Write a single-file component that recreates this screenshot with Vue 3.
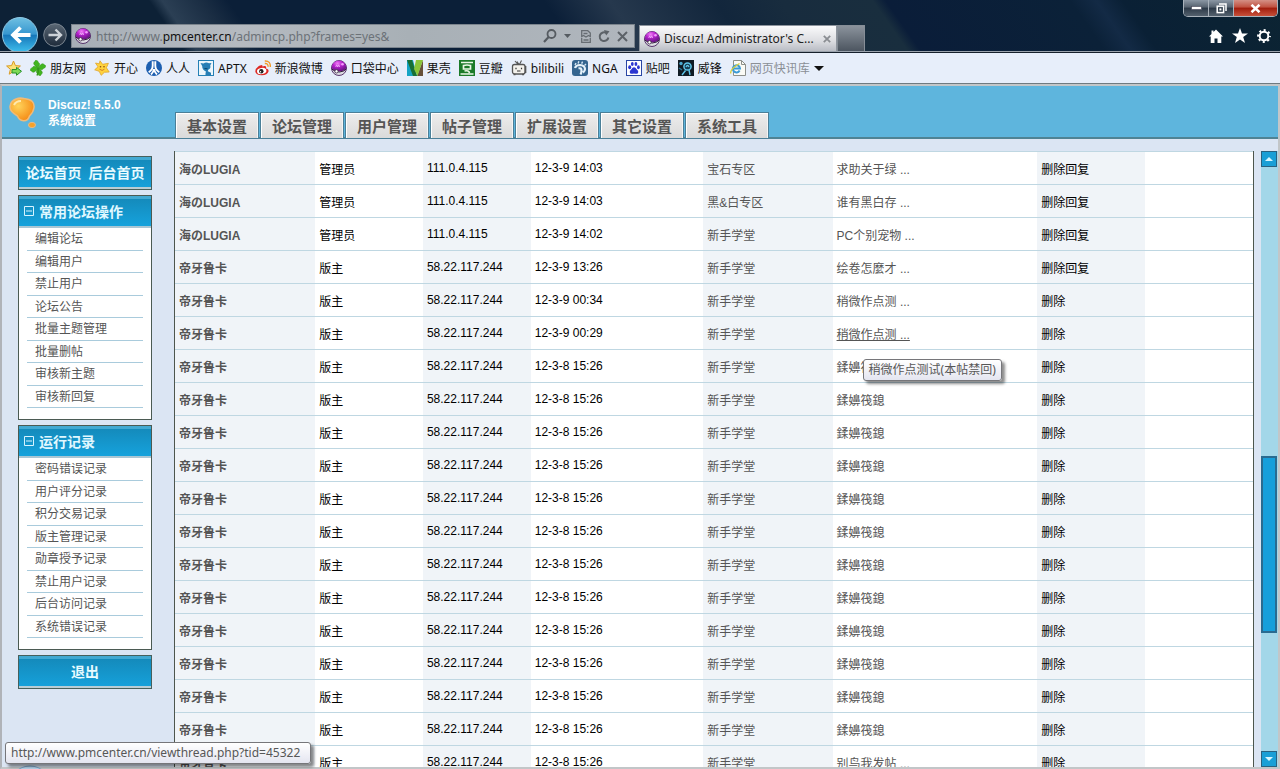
<script setup>
const tabs = ['基本设置', '论坛管理', '用户管理', '帖子管理', '扩展设置', '其它设置', '系统工具']

const favourites = [
  { icon: 'clover', label: '朋友网' },
  { icon: 'happy', label: '开心' },
  { icon: 'renren', label: '人人' },
  { icon: 'aptx', label: 'APTX' },
  { icon: 'weibo', label: '新浪微博' },
  { icon: 'ball', label: '口袋中心' },
  { icon: 'guokr', label: '果壳' },
  { icon: 'douban', label: '豆瓣' },
  { icon: 'bili', label: 'bilibili' },
  { icon: 'nga', label: 'NGA' },
  { icon: 'paw', label: '贴吧' },
  { icon: 'feng', label: '威锋' }
]

const groups = [
  {
    title: '常用论坛操作',
    items: ['编辑论坛', '编辑用户', '禁止用户', '论坛公告', '批量主题管理', '批量删帖', '审核新主题', '审核新回复']
  },
  {
    title: '运行记录',
    items: ['密码错误记录', '用户评分记录', '积分交易记录', '版主管理记录', '勋章授予记录', '禁止用户记录', '后台访问记录', '系统错误记录']
  }
]

const lugia = (time, forum, thread) => ['海のLUGIA', '管理员', '111.0.4.115', time, forum, thread, '删除回复']
const mod = (time, thread, action = '删除') => ['帝牙鲁卡', '版主', '58.22.117.244', time, '新手学堂', thread, action]

const rows = [
  lugia('12-3-9 14:03', '宝石专区', '求助关于绿 ...'),
  lugia('12-3-9 14:03', '黑&白专区', '谁有黑白存 ...'),
  lugia('12-3-9 14:02', '新手学堂', 'PC个别宠物 ...'),
  mod('12-3-9 13:26', '绘卷怎麼才 ...', '删除回复'),
  mod('12-3-9 00:34', '稍微作点测 ...'),
  mod('12-3-9 00:29', '稍微作点测 ...'),
  ...Array.from({ length: 12 }, () => mod('12-3-8 15:26', '鍒嬶筏鎴')),
  mod('12-3-8 15:26', '别鸟我发帖 ...')
]
const hovered = 5
</script>

<template>
  <div class="window">
    <svg class="defs" aria-hidden="true">
      <defs>
        <radialGradient id="ballGrad" cx="0.4" cy="0.25" r="0.8">
          <stop offset="0" stop-color="#f27cf8" /><stop offset="0.4" stop-color="#b522cc" /><stop offset="1" stop-color="#5b1278" />
        </radialGradient>
        <linearGradient id="backGrad" x1="0" y1="0" x2="0" y2="1">
          <stop offset="0" stop-color="#6fc0e2" /><stop offset="0.48" stop-color="#3696cf" /><stop offset="0.5" stop-color="#1675b8" /><stop offset="1" stop-color="#3fc0ee" />
        </linearGradient>
        <linearGradient id="fwdGrad" x1="0" y1="0" x2="0" y2="1">
          <stop offset="0" stop-color="#5b6875" /><stop offset="1" stop-color="#1d2a3a" />
        </linearGradient>
        <radialGradient id="logoGrad" cx="0.35" cy="0.35" r="0.7">
          <stop offset="0" stop-color="#ffd35a" /><stop offset="1" stop-color="#f58a14" />
        </radialGradient>
        <symbol id="i-ball" viewBox="0 0 16 16">
          <circle cx="8" cy="8" r="7.500" fill="#dcdce2" stroke="#4a2260" stroke-width=".9" />
          <path d="M.6 8A7.400 7.400 0 0 1 15.400 8Q14 11 8.500 11.500 2 11 .6 8z" fill="url(#ballGrad)" />
          <path d="M.8 9Q3 11.800 8.500 12 13.500 11.500 15.200 9" fill="none" stroke="#33203c" />
          <circle cx="5.500" cy="11.300" r="1.700" fill="#fff" stroke="#33203c" stroke-width=".8" />
          <path d="M4.700 7l1-2.200 1 2.200 1-2.200 1 2.200" fill="none" stroke="#f3b6fb" stroke-width=".8" />
          <circle cx="11.500" cy="4.300" r="1.300" fill="#f49afc" />
        </symbol>
        <symbol id="i-clover" viewBox="0 0 16 16">
          <g fill="#43b520" stroke="#2c8e14" stroke-width=".4">
            <path d="M8 8C3 8 .5 6.500 2 4.500 1 2 4 1.500 5 3 8 3 8 5 8 8z" transform="rotate(32 8 8)" />
            <path d="M8 8C3 8 .5 6.500 2 4.500 1 2 4 1.500 5 3 8 3 8 5 8 8z" transform="rotate(122 8 8)" />
            <path d="M8 8C3 8 .5 6.500 2 4.500 1 2 4 1.500 5 3 8 3 8 5 8 8z" transform="rotate(212 8 8)" />
            <path d="M8 8C3 8 .5 6.500 2 4.500 1 2 4 1.500 5 3 8 3 8 5 8 8z" transform="rotate(302 8 8)" />
          </g>
          <path d="M8 8Q9 12 7 15.500" fill="none" stroke="#36931a" stroke-width="1.500" />
        </symbol>
        <symbol id="i-happy" viewBox="0 0 16 16">
          <path d="M6 .8l2.600 3.500 5.800-1-2 4.400 2.800 4.300-4.800.3-3.200 3-2-4L.7 9.800 4 6.800 1.500 3 5.200 3.800z" fill="#ffd33e" stroke="#e0a52c" stroke-width=".8" stroke-linejoin="round" />
          <circle cx="6.500" cy="6.800" r=".8" fill="#8a4a0c" /><circle cx="10" cy="6.800" r=".8" fill="#8a4a0c" />
          <path d="M5.500 9.200q2.800 2.400 5 0" fill="none" stroke="#c8641c" stroke-width=".8" />
        </symbol>
        <symbol id="i-renren" viewBox="0 0 16 16">
          <circle cx="8" cy="8" r="8" fill="#1d5fb0" />
          <path d="M6.700 1.200v4.500q0 4-4 6.500M9.300 1.200v4.500q0 4 4 6.500M8 9.200q-.5 3-3 5.300M8 9.200q.5 3 3 5.300" fill="none" stroke="#fff" stroke-width="1.900" />
        </symbol>
        <symbol id="i-aptx" viewBox="0 0 16 16">
          <rect x=".5" y=".5" width="15" height="15" fill="#edf6fb" stroke="#2580b5" />
          <path d="M2.500 3l3 .6Q8 1.600 11 3.300l2.500-.3-1.300 2.500q1 3-2 4.300l-.4 1.500 3.200 1.400V15H7.500v-1.500l.4-2Q4 9.500 4.200 6z" fill="#277eb5" />
          <path d="M6.500 8.500l3 .3" stroke="#0e4568" />
        </symbol>
        <symbol id="i-weibo" viewBox="0 0 16 16">
          <path d="M6.200 5.200Q7.800 4.600 7.400 6.600 11 5.300 11.200 7.500L11 8.500q3 .7 2.500 3Q12.500 15 6.700 15.300.8 15 .3 11.500.3 8.500 3.500 6.300 5 5.200 6.200 5.200z" fill="#dd2824" />
          <ellipse cx="6.700" cy="11" rx="4.700" ry="3.100" fill="#fff" transform="rotate(-8 6.700 11)" />
          <circle cx="6.300" cy="11.200" r="2.200" fill="#222" /><circle cx="5.500" cy="11.700" r=".7" fill="#fff" />
          <path d="M9.800 3.500q3.400-.4 3.300 3.300M9.800 1q6-.3 5.500 6" fill="none" stroke="#f39a26" stroke-width="1.400" />
        </symbol>
        <symbol id="i-guokr" viewBox="0 0 16 16">
          <path d="M0 0h6l4 16H0z" fill="#15a4c4" /><path d="M0 0h5l5 16H6z" fill="#176f35" />
          <path d="M10 16L16 0v16z" fill="#66503a" /><path d="M9 0h7l-5.500 16L7 9z" fill="#8bc53a" />
        </symbol>
        <symbol id="i-douban" viewBox="0 0 16 16">
          <rect width="16" height="16" fill="#1b7a28" />
          <path d="M2 2.500h12M4.500 5.500Q8 4.500 11.500 5.500v3.500h-7zM5.500 11Q10 10 10.500 13M1.500 14h13" fill="none" stroke="#eaf7e6" stroke-width="1.700" />
        </symbol>
        <symbol id="i-bili" viewBox="0 0 16 16">
          <path d="M4 1l3 3.500M10.500 .5L8.500 4.500M6 1.500l2 3" stroke="#555" stroke-width="1.100" fill="none" />
          <rect x="1.500" y="4.500" width="12.500" height="9.500" rx="2" fill="#f3f1ec" stroke="#555" stroke-width="1.300" />
          <path d="M2.500 14.500h2M11 14.500h2M14.600 6v7" stroke="#555" stroke-width="1.500" />
          <path d="M5 7.800v1.500M10.500 7.800v1.500M6 11h3.500" stroke="#333" stroke-width="1.200" />
        </symbol>
        <symbol id="i-nga" viewBox="0 0 16 16">
          <rect width="16" height="16" rx="3" fill="#35658f" />
          <path d="M3 8Q4 5 8 5 12.800 5.500 13 9 13 11 11 12.500M6.500 8.500q3-1 3 2 0 2.500-1 4" fill="none" stroke="#e6f2fa" stroke-width="2.200" />
          <path d="M3 5L4 3M6.200 3.500L6.800 1.200M9.600 3.600l1-2M12.500 5.500L14 4" stroke="#d4e6f4" stroke-width="1.400" />
        </symbol>
        <symbol id="i-paw" viewBox="0 0 16 16">
          <rect x=".5" y=".5" width="15" height="15" fill="#fff" stroke="#2946a5" />
          <g fill="#2b36d1"><ellipse cx="3.700" cy="7.300" rx="1.500" ry="2" /><ellipse cx="6.300" cy="4" rx="1.400" ry="2.100" /><ellipse cx="9.900" cy="4" rx="1.400" ry="2.100" /><ellipse cx="12.400" cy="7.300" rx="1.400" ry="2" /><path d="M8 7.200q1.600 0 2.600 2 2.400 1.600 1.500 3.700-1.200 1.400-4.100.7-3 .7-4.100-.7-.9-2.100 1.500-3.700 1-2 2.600-2z" /></g>
        </symbol>
        <symbol id="i-feng" viewBox="0 0 16 16">
          <rect width="16" height="16" fill="#101b24" />
          <circle cx="9.500" cy="6.500" r="3.600" fill="#173c50" stroke="#5ec6ea" stroke-width="1.500" />
          <path d="M8 7q1.500-3 3 0M7.500 10.500L4 15M11 10l1 5" stroke="#5ec6ea" stroke-width="1.400" fill="none" />
          <circle cx="3" cy="3.500" r="1.700" fill="#4aa9cf" /><path d="M1 8l3 2" stroke="#2c7897" stroke-width="1.500" />
        </symbol>
      </defs>
    </svg>

    <header class="chrome">
      <div class="captions">
        <button class="cap" aria-label="最小化"><svg width="11" height="4"><rect x=".5" y=".5" width="10" height="3" fill="#fff" stroke="#445" stroke-width=".6" /></svg></button>
        <button class="cap" aria-label="还原"><svg width="11" height="11" viewBox="0 0 11 11" fill="none" stroke="#fff" stroke-width="1.500"><path d="M3 1h7v7" /><rect x="1.200" y="3.200" width="6.400" height="6.400" /><rect x="3.900" y="5.900" width="1" height="1" stroke-width="1" /></svg></button>
        <button class="cap close" aria-label="关闭"><svg width="11" height="9" viewBox="0 0 11 9"><path d="M1.500 .8L9.500 8.200M9.500 .8L1.500 8.200" stroke="#fff" stroke-width="2.600" /></svg></button>
      </div>
      <button class="back" aria-label="后退">
        <svg width="36" height="34" viewBox="0 0 36 34"><circle cx="18" cy="18" r="17.500" fill="url(#backGrad)" stroke="#8fc8e4" /><path d="M28.500 18H11M18.500 10.500L11 18l7.500 7.500" fill="none" stroke="#fff" stroke-width="3.800" /></svg>
      </button>
      <button class="forward" aria-label="前进">
        <svg width="24" height="24" viewBox="0 0 24 24"><circle cx="12" cy="12" r="11.300" fill="url(#fwdGrad)" stroke="#7b8691" /><path d="M5.500 12h12M12.500 6.500l5.500 5.500-5.500 5.500" fill="none" stroke="#ccd2d8" stroke-width="2.400" /></svg>
      </button>
      <div class="address">
        <svg width="16" height="16"><use href="#i-ball" /></svg>
        <span class="url">http://www.<b>pmcenter.cn</b>/admincp.php?frames=yes&amp;</span>
        <div class="tools">
          <button aria-label="搜索"><svg width="14" height="14" viewBox="0 0 14 14" fill="none" stroke="#555b61"><circle cx="8.500" cy="5" r="4" stroke-width="1.800" /><path d="M5.600 8L1 13" stroke-width="2.200" /></svg></button>
          <button aria-label="展开"><svg width="7" height="4"><path d="M0 0h7L3.500 4z" fill="#555b61" /></svg></button>
          <button class="compat" aria-label="兼容性视图"><svg width="10" height="13" viewBox="0 0 10 13" fill="none" stroke="#676d73"><path d="M.7 6V.7h6L9.300 3v3M.7 8v4.300h8.600V8M0 7l2.500-1.500L5 7l2.500-1.500L10 7M2.500 3.500h4M2.500 10h5" stroke-width="1.300" /></svg></button>
          <button aria-label="刷新"><svg width="12" height="13" viewBox="0 0 12 13"><path d="M8.500 3A4.400 4.400 0 1 0 10.400 7.500" fill="none" stroke="#5c6268" stroke-width="2" /><path d="M6 0l5.500 1.200L8.200 5.500z" fill="#5c6268" /></svg></button>
          <button aria-label="停止"><svg width="11" height="11"><path d="M1 1l9 9M10 1l-9 9" stroke="#5c6268" stroke-width="2" /></svg></button>
        </div>
      </div>
      <div class="pagetab">
        <svg width="16" height="16"><use href="#i-ball" /></svg>
        <span>Discuz! Administrator's C...</span>
        <button aria-label="关闭标签"><svg width="8" height="8"><path d="M.8.8l6.400 6.400M7.200.8L.8 7.200" stroke="#8a8d92" stroke-width="1.800" /></svg></button>
      </div>
      <button class="newtab" aria-label="新标签"></button>
      <div class="commands">
        <button aria-label="主页"><svg width="14" height="14" viewBox="0 0 14 14"><path d="M7 .5L14 7.500h-1.700V14H8.500V9.500h-3V14H1.700V7.500H0L2.500 5V1.500h2V3z" fill="#fff" /></svg></button>
        <button aria-label="收藏夹"><svg width="16" height="15" viewBox="0 0 16 15"><path d="M8 0l2 5.500h6l-4.800 3.600L13 15l-5-3.500L3 15l1.800-5.900L0 5.500h6z" fill="#fff" /></svg></button>
        <button aria-label="工具"><svg width="14" height="14" viewBox="-7 -7 14 14"><circle r="4.300" fill="none" stroke="#fff" stroke-width="2" /><circle r="5.900" fill="none" stroke="#fff" stroke-width="2" stroke-dasharray="2.100 2.534" stroke-dashoffset="1.050" /></svg></button>
      </div>
    </header>

    <nav class="favs">
      <button class="addfav" aria-label="添加到收藏夹栏">
        <svg width="16" height="16" viewBox="0 0 16 16"><path d="M7.500 1l1.900 4.600 5 .4-3.800 3.300 1.200 4.900-4.300-2.700-4.300 2.700 1.200-4.900L.6 6l5-.4z" fill="#fbe277" stroke="#d99b25" /><path d="M6 9.500h4.500V7.300l5 4-5 4V13H6z" fill="#7ed957" stroke="#26912a" /></svg>
      </button>
      <a v-for="f in favourites" :key="f.label" href="#" class="fav">
        <svg width="16" height="16"><use :href="'#i-' + f.icon" /></svg>{{ f.label }}
      </a>
      <button class="fav slices">
        <svg width="16" height="16" viewBox="0 0 16 16"><path d="M3.500.5h8l4 4v11h-12z" fill="#fbfbf6" stroke="#8c8f8a" /><path d="M11.500.5v4h4" fill="none" stroke="#8c8f8a" /><path d="M9.600 10.500A3.600 3.600 0 1 1 10 8.500H3.500" fill="none" stroke="#3b9ad6" stroke-width="2" /><path d="M.7 13.500Q0 9 9.500 3.500" fill="none" stroke="#d9cf3a" stroke-width="1.400" /></svg>
        网页快讯库
        <svg width="10" height="5"><path d="M0 0h10L5 5z" fill="#111" /></svg>
      </button>
    </nav>

    <main class="page">
      <div class="banner">
        <svg class="logo" width="28" height="32" viewBox="0 0 28 32">
          <path d="M3 4.500Q8 0 15 1.500q11 1 10 9-.5 4.500-4.500 8.500-1.500 5-6 4.800-4.500-.5-6-4.800Q.5 14.500 1 9.500 1.200 6.500 3 4.500z" fill="url(#logoGrad)" stroke="#f0bb78" stroke-width="1.500" />
          <path d="M5 8Q7 4 12 4" fill="none" stroke="#ffe9ad" stroke-width="2" />
          <ellipse cx="23" cy="28" rx="3.500" ry="2.700" fill="#f6a22a" stroke="#e3bb8c" />
        </svg>
        <div class="brand">Discuz! 5.5.0<br>系统设置</div>
        <nav class="tabs"><a v-for="t in tabs" :key="t" href="#">{{ t }}</a></nav>
      </div>

      <div class="body">
        <aside class="side">
          <div class="bar"><a href="#">论坛首页</a><a href="#">后台首页</a></div>
          <section v-for="g in groups" :key="g.title" class="group">
            <h2>
              <svg width="10" height="10"><path d="M.5.5h9v9h-9zM2 5h6" fill="none" stroke="#d8f4ff" /></svg>
              {{ g.title }}
            </h2>
            <ul><li v-for="i in g.items" :key="i"><a href="#">{{ i }}</a></li></ul>
          </section>
          <div class="bar"><a href="#">退出</a></div>
        </aside>

        <div class="sheet">
          <table>
            <colgroup>
              <col class="c1"><col class="c2"><col class="c2"><col class="c4"><col class="c5"><col class="c6"><col class="c2"><col class="c2">
            </colgroup>
            <tbody>
              <tr v-for="(r, n) in rows" :key="n">
                <td><a href="#">{{ r[0] }}</a></td>
                <td>{{ r[1] }}</td>
                <td>{{ r[2] }}</td>
                <td>{{ r[3] }}</td>
                <td><a href="#">{{ r[4] }}</a></td>
                <td>
                  <a href="#" :class="{ hover: n === hovered }">{{ r[5] }}</a>
                  <span v-if="n === hovered" class="tip" role="tooltip">稍微作点测试(本帖禁回)</span>
                </td>
                <td>{{ r[6] }}</td>
                <td></td>
              </tr>
            </tbody>
          </table>
        </div>

        <div class="scroll">
          <button aria-label="向上"><svg width="8" height="4"><path d="M0 4h8L4 0z" fill="#d8f7ff" /></svg></button>
          <div class="track"><div class="thumb"></div></div>
          <button aria-label="向下"><svg width="8" height="4"><path d="M0 0h8L4 4z" fill="#d8f7ff" /></svg></button>
        </div>
      </div>
    </main>
    <svg class="orb" width="28" height="4" viewBox="0 0 28 4"><circle cx="14" cy="22" r="21" fill="#b9d6ee" stroke="#7da7cc" /></svg>
    <div class="status">http://www.pmcenter.cn/viewthread.php?tid=45322</div>
  </div>
</template>

<style>
body { margin: 0; overflow: hidden; }
</style>

<style scoped>
.window {
  position: relative; display: flex; flex-direction: column; height: 100vh; overflow: hidden;
  box-sizing: border-box; font: 12px "Liberation Sans", "Noto Sans CJK SC", sans-serif; color: #000; background: #dbe5f3;
}
.defs { position: absolute; width: 0; height: 0; }
svg { display: block; flex: none; }
button { border: 0; padding: 0; margin: 0; background: none; font: inherit; color: inherit; display: flex; align-items: center; justify-content: center; }
a { color: inherit; text-decoration: none; }

.chrome {
  position: relative; flex: none; display: flex; align-items: flex-end; height: 51px; border-bottom: 1px solid #9ba3ad;
  background: linear-gradient(55deg, #0d2136 0%, #0d2136 14%, #2b3f54 15%, #1a2d43 18%, #0b1f38 20%, #0b1f38 44%, #26384d 49%, #12263c 57%, #182c3e 62%, #192e3e 69%, #0a1d39 70%, #0b2138 84%, #132a45 86%, #0a2035 88%, #0c2433 100%);
  font-family: "Noto Sans", "Noto Sans CJK SC", sans-serif;
}
.captions { position: absolute; top: 0; right: 2px; display: flex; height: 16px; border: 1px solid #a9b2bb; border-top: 0; border-radius: 0 0 5px 5px; overflow: hidden; }
.cap { width: 25px; border-right: 1px solid #a9b2bb; background: linear-gradient(#8b97a4, #56626f 45%, #2c3947 50%, #54616e); }
.cap.close { width: 43px; border: 0; background: linear-gradient(#d49085, #c0503f 45%, #a01c0c 50%, #c8503a); }
.back { margin-left: 2px; }
.forward { margin: 0 0 4px 5px; }
.address {
  flex: 1; max-width: 564px; display: flex; align-items: center; gap: 5px; height: 24px; box-sizing: border-box; margin: 0 4px 3px 4px; padding: 0 6px 0 3px;
  background: linear-gradient(90deg, #a7afb7, #b5bac0 30%, #a8b0b6 60%, #b0b6bd); border: 1px solid #7b848d;
}
.url { flex: 1; font-size: 12px; color: #6c7278; white-space: nowrap; }
.url b { font-weight: 400; color: #111; }
.tools { display: flex; align-items: center; gap: 7px; }
.compat { margin-left: 3px; }
.pagetab {
  display: flex; align-items: center; gap: 4px; width: 198px; height: 26px; box-sizing: border-box; padding: 0 5px 0 4px; border: 1px solid #8d949d; border-bottom: 0;
  background: linear-gradient(#fafafb, #dcdde1 60%, #b9bcc4); color: #222;
}
.pagetab span { flex: 1; white-space: nowrap; }
.newtab { width: 28px; height: 26px; border: 1px solid #868e97; border-bottom: 0; background: linear-gradient(#8b939c, #4c5560); }
.commands { margin: 0 9px 8px auto; display: flex; align-items: center; gap: 9px; }

.favs {
  flex: none; display: flex; align-items: center; gap: 8px; height: 30px; padding-left: 6px; border-top: 1px solid #16202c; border-bottom: 1px solid #6f7a80;
  background: #e7eefa; font-family: "Noto Sans", "Noto Sans CJK SC", sans-serif; color: #111; white-space: nowrap;
}
.fav { display: flex; align-items: center; gap: 4px; }
.slices { color: #8a8f96; }

.page { flex: 1; min-height: 0; display: flex; flex-direction: column; border: 2px solid #c2c6c8; border-left-color: #b0b3b8; }
.banner { flex: none; display: flex; height: 51px; background: #5eb5dd; border-bottom: 2px solid #4f8394; }
.logo { margin: 11px 0 0 7px; }
.brand { width: 127px; margin: 11px 0 0 11px; font-weight: 700; line-height: 16px; color: #fff; }
.tabs { display: flex; align-items: flex-end; gap: 1px; }
.tabs a {
  width: 84px; height: 27px; line-height: 28px; margin-bottom: -2px; box-sizing: border-box; text-align: center; font-size: 15px; font-weight: 700; color: #555;
  border: 1px solid #4a7f98; background: linear-gradient(#ededed, #dadada); box-shadow: inset 1px 1px #fff, inset -1px 0 #f4f4f4;
}

.body { flex: 1; min-height: 0; display: flex; }
.side { flex: none; width: 134px; padding: 17px 0 0 16px; display: flex; flex-direction: column; gap: 5px; }
.bar {
  display: flex; align-items: center; justify-content: center; gap: 7px; height: 30px; padding-bottom: 2px; border: 1px solid #47605c; white-space: nowrap;
  background: linear-gradient(#1488b8, #16a2dc); box-shadow: inset 0 3px #42a9d2, inset 0 -2px #b8cdd4; color: #e8fbff; font-size: 14px; font-weight: 700;
}
.group { border: 1px solid #4b5a52; background: #fff; padding-bottom: 11px; }
.group h2 {
  display: flex; align-items: center; gap: 5px; height: 30px; margin: 0; padding-left: 5px; border-bottom: 2px solid #a9c6d4;
  background: linear-gradient(#1488b8, #16a2dc); box-shadow: inset 0 3px #42a9d2; color: #e0f8ff; font-size: 14px;
}
.group ul { list-style: none; margin: 0 8px; padding: 0; }
.group li { height: 21px; line-height: 23px; padding-left: 8px; border-bottom: 1px solid #a9cbdc; color: #555; }
.group li:nth-child(odd) { height: 22px; }

.sheet { flex: 1; min-width: 0; margin: 12px 7px 0 22px; border-left: 1px solid #4d564d; border-right: 1px solid #4d564d; overflow: hidden; background: #fff; }
table { width: 100%; table-layout: fixed; border-collapse: separate; border-spacing: 0; }
.c1 { width: 13%; } .c2 { width: 10%; } .c4 { width: 16%; } .c5 { width: 12%; } .c6 { width: 19%; }
td { position: relative; height: 32px; padding: 0 4px; border-top: 1px solid #bfd7e2; white-space: nowrap; background: #fff; }
td:nth-child(odd) { background: #f0f4f8; }
td a { color: #555; }
td:first-child a { font-weight: 700; }
.hover { text-decoration: underline; }
.tip, .status {
  position: absolute; z-index: 2; box-sizing: border-box; height: 22px; line-height: 20px; padding: 0 5px; border: 1px solid #76767a; border-radius: 3px; white-space: nowrap;
  background: linear-gradient(#fff, #e4e5f0); box-shadow: 3px 3px 3px rgba(0, 0, 0, .45); color: #575757; font-family: "Noto Sans", "Noto Sans CJK SC", sans-serif;
}
.tip { left: 30px; top: 42px; }
.status { left: 5px; bottom: 5px; padding-right: 10px; }
.orb { position: absolute; left: 16px; bottom: 0; }

.scroll { flex: none; width: 17px; margin-top: 12px; display: flex; flex-direction: column; background: #a3d7e9; }
.scroll button { flex: none; width: 16px; height: 16px; box-sizing: border-box; border: 1px solid #2a6280; background: #1a9fd6; }
.track { flex: 1; display: flex; flex-direction: column; }
.track::before { content: ""; flex: 290 1 0; }
.track::after { content: ""; flex: 119 1 0; }
.thumb { flex: 174 1 0; width: 16px; box-sizing: border-box; border: 2px solid #2a6b90; background: #169fdb; }
</style>
